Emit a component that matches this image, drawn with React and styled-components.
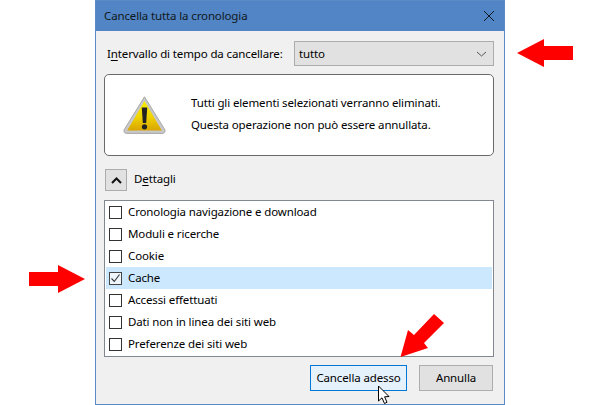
import React from "react";
import styled, { createGlobalStyle } from "styled-components";

const GlobalStyle = createGlobalStyle`
  html, body {
    margin: 0;
    padding: 0;
    background: #fff;
  }
`;

const Page = styled.div`
  position: relative;
  width: 600px;
  height: 405px;
  overflow: hidden;
  background: #fff;
  font-family: "Noto Sans", "Open Sans", sans-serif;
  font-size: 11.5px;
  letter-spacing: -0.13px;
  color: #000;
`;

const Dialog = styled.div`
  box-sizing: border-box;
  width: 410px;
  height: 405px;
  margin-left: 95px;
  border: 1px solid #5a8bc6;
  background: #f0f0f0;
  display: flex;
  flex-direction: column;
`;

const TitleBar = styled.div`
  height: 30px;
  flex: none;
  background: #5285c5;
  padding: 0 8px;
  display: flex;
  align-items: center;
  justify-content: space-between;
  color: #101820;
`;

const CloseButton = styled.svg`
  width: 12px;
  height: 12px;
  margin-right: 1px;
`;

const Body = styled.div`
  flex: 1;
  padding: 10px 10px 0 8px;
  display: flex;
  flex-direction: column;
`;

const RangeRow = styled.div`
  height: 25px;
  flex: none;
  display: flex;
  align-items: center;
  justify-content: space-between;
  padding-left: 3px;
`;

const Select = styled.div`
  box-sizing: border-box;
  width: 200px;
  height: 25px;
  padding: 0 6px 0 4px;
  border: 1px solid #acacac;
  background: #e1e1e1;
  display: flex;
  align-items: center;
  justify-content: space-between;
`;

const MessageBox = styled.div`
  box-sizing: border-box;
  height: 82px;
  flex: none;
  margin-top: 8px;
  border: 1px solid #6a6a6a;
  border-radius: 5px;
  background: #fff;
  display: flex;
  align-items: center;
  padding-left: 18px;
  gap: 25px;
`;

const MessageText = styled.div`
  display: flex;
  flex-direction: column;
  gap: 4px;
  line-height: 18px;
  padding-bottom: 3px;
`;

const DetailsRow = styled.div`
  margin-top: 13px;
  flex: none;
  display: flex;
  align-items: center;
  gap: 7px;
  padding-left: 1px;
`;

const ToggleButton = styled.div`
  box-sizing: border-box;
  width: 22px;
  height: 22px;
  border: 1px solid #acacac;
  background: #e1e1e1;
  display: flex;
  align-items: center;
  justify-content: center;
`;

const List = styled.div`
  box-sizing: border-box;
  height: 157px;
  flex: none;
  margin-top: 9px;
  border: 1px solid #828790;
  background: #fff;
  padding: 0 1px;
`;

const Row = styled.div`
  height: 22px;
  display: flex;
  align-items: center;
  gap: 6px;
  padding-left: 3px;
  background: ${(p) => (p.$selected ? "#cce8ff" : "transparent")};
`;

const Box = styled.div`
  box-sizing: border-box;
  width: 13px;
  height: 13px;
  border: 1px solid #333;
  background: #fff;
  display: flex;
  align-items: center;
  justify-content: center;
  ${(p) => p.$selected && "background: #eef6fc; border-color: #444;"}
`;

const Footer = styled.div`
  margin-top: 8px;
  display: flex;
  justify-content: flex-end;
  gap: 12px;
  padding-right: 1px;
`;

const Button = styled.div`
  box-sizing: border-box;
  height: 26px;
  width: ${(p) => p.$width}px;
  border: 1px solid ${(p) => (p.$hot ? "#0078d7" : "#adadad")};
  background: ${(p) => (p.$hot ? "#e5f1fb" : "#e1e1e1")};
  display: flex;
  align-items: center;
  justify-content: center;
`;

/* Noto sits a little lower than the original UI font, this lifts the label */
const Label = styled.span`
  padding-bottom: ${(p) => p.$lift || 2}px;
`;

const Underlined = styled.span`
  text-decoration: underline;
  text-underline-offset: 2px;
  text-decoration-thickness: 1px;
`;

const Overlay = styled.svg`
  position: absolute;
  left: ${(p) => p.$x}px;
  top: ${(p) => p.$y}px;
  width: ${(p) => p.$w}px;
  height: ${(p) => p.$h}px;
`;

const items = [
  "Cronologia navigazione e download",
  "Moduli e ricerche",
  "Cookie",
  "Cache",
  "Accessi effettuati",
  "Dati non in linea dei siti web",
  "Preferenze dei siti web",
];

const WarningIcon = () => (
  <svg width="43" height="38" viewBox="0 0 43 38">
    <defs>
      <linearGradient id="warnFill" x1="0" y1="0" x2="0" y2="1">
        <stop offset="0" stopColor="#f8ee00" />
        <stop offset="0.55" stopColor="#f0d400" />
        <stop offset="1" stopColor="#d8a400" />
      </linearGradient>
    </defs>
    <path d="M21.5 0.8 L42 34 Q42.6 37.4 39 37.4 L4 37.4 Q0.4 37.4 1 34 Z" fill="#c8c8c8" stroke="#a8a8a8" strokeWidth="1" strokeLinejoin="round" />
    <path d="M21.5 5 L38.8 34.5 L4.2 34.5 Z" fill="url(#warnFill)" />
    <path d="M18.8 11.5 L24.2 11.5 L23.2 27 L19.8 27 Z" fill="#222" />
    <circle cx="21.5" cy="30.8" r="2.6" fill="#222" />
  </svg>
);

const App = () => {
  return (
    <Page>
      <GlobalStyle />
      <Dialog>
        <TitleBar>
          <Label>Cancella tutta la cronologia</Label>
          <CloseButton viewBox="0 0 12 12">
            <path d="M1 1 L11 11 M11 1 L1 11" stroke="#101820" strokeWidth="1" fill="none" />
          </CloseButton>
        </TitleBar>
        <Body>
          <RangeRow>
            <span>
              I<Underlined>n</Underlined>tervallo di tempo da cancellare:
            </span>
            <Select>
              <span>tutto</span>
              <svg width="11" height="6" viewBox="0 0 11 6">
                <path d="M1 1 L5.5 5 L10 1" stroke="#555" strokeWidth="1" fill="none" />
              </svg>
            </Select>
          </RangeRow>
          <MessageBox>
            <WarningIcon />
            <MessageText>
              <span>Tutti gli elementi selezionati verranno eliminati.</span>
              <span>Questa operazione non può essere annullata.</span>
            </MessageText>
          </MessageBox>
          <DetailsRow>
            <ToggleButton>
              <svg width="11" height="7" viewBox="0 0 11 7">
                <path d="M1 6 L5.5 1.5 L10 6" stroke="#111" strokeWidth="2" fill="none" />
              </svg>
            </ToggleButton>
            <Label $lift={3}>
              D<Underlined>e</Underlined>ttagli
            </Label>
          </DetailsRow>
          <List>
            {items.map((label) => {
              const selected = label === "Cache";
              return (
                <Row key={label} $selected={selected}>
                  <Box $selected={selected}>
                    {selected && (
                      <svg width="11" height="11" viewBox="0 0 11 11">
                        <path d="M1.5 5.5 L4.3 8.5 L9.5 1.5" stroke="#333" strokeWidth="1.1" fill="none" />
                      </svg>
                    )}
                  </Box>
                  <Label>{label}</Label>
                </Row>
              );
            })}
          </List>
          <Footer>
            <Button $width={97} $hot>
              <Label>Cancella adesso</Label>
            </Button>
            <Button $width={74}>
              <Label>Annulla</Label>
            </Button>
          </Footer>
        </Body>
      </Dialog>

      <Overlay $x={517} $y={39} $w={57} $h={28} viewBox="0 0 57 28">
        <path d="M0 14 L27 0 L27 7 L56 7 L56 21 L27 21 L27 28 Z" fill="#ff0000" />
      </Overlay>
      <Overlay $x={29} $y={265} $w={57} $h={28} viewBox="0 0 57 28">
        <path d="M56 14 L29 0 L29 7 L0 7 L0 21 L29 21 L29 28 Z" fill="#ff0000" />
      </Overlay>
      <Overlay $x={398} $y={312} $w={46} $h={47} viewBox="0 0 46 47">
        <path d="M2.5 45 L10 18 L16 23 L36 2 L46 11 L26 31 L30 36 Z" fill="#ff0000" />
      </Overlay>
      <Overlay $x={377} $y={385} $w={14} $h={20} viewBox="0 0 14 20">
        <path d="M1.5 1 L1.5 16 L5 12.8 L7.5 18.5 L10 17.3 L7.6 11.8 L12 11.5 Z" fill="#fff" stroke="#000" strokeWidth="1" />
      </Overlay>
    </Page>
  );
};

export default App;
